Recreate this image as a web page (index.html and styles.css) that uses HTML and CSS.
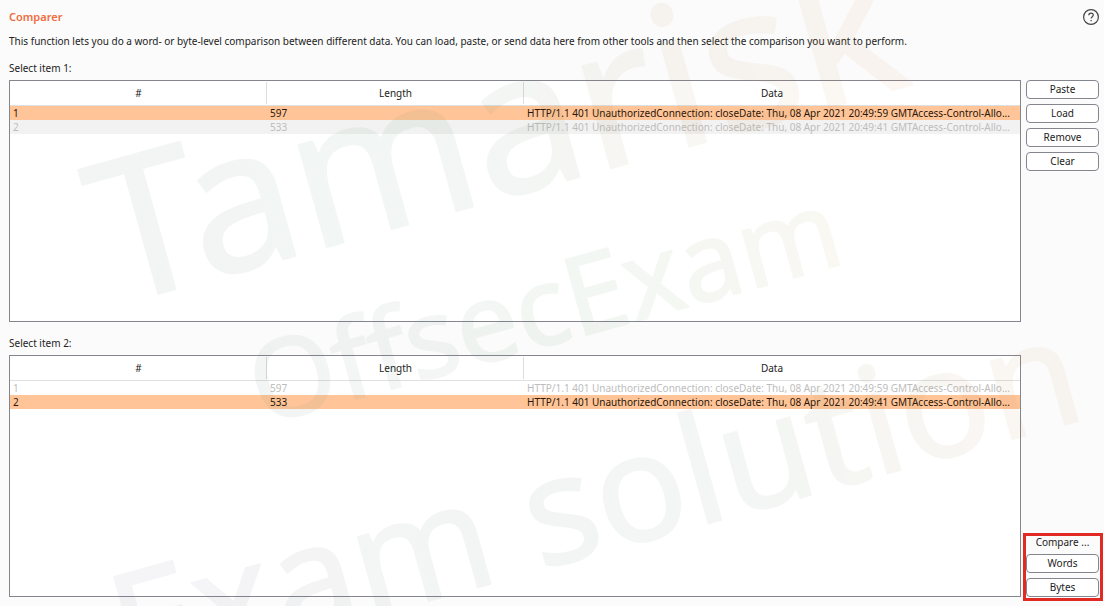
FILE: index.html
```html
<!DOCTYPE html>
<html lang="en">
<head>
<meta charset="utf-8">
<title>Comparer</title>
<link rel="stylesheet" href="styles.css">
</head>
<body>
<main class="comparer">
  <header class="heading">
    <h1 class="title">Comparer</h1>
    <button class="help" type="button" aria-label="Help">
      <svg class="help-icon" viewBox="0 0 16 16" aria-hidden="true">
        <circle cx="8" cy="8" r="7.4"/>
        <path d="M5.8 6.3C5.8 4.9 6.7 4.1 8 4.1s2.3.8 2.3 2c0 1.600-2.200 1.700-2.200 3.500M8.100 11v1.300"/>
      </svg>
    </button>
  </header>
  <p class="intro">This function lets you do a word- or byte-level comparison between different data. You can load, paste, or send data here from other tools and then select the comparison you want to perform.</p>

  <div class="workspace">
    <section class="item">
      <h2 class="label" id="item1">Select item 1:</h2>
      <div class="panel">
        <table class="grid" aria-labelledby="item1">
          <thead><tr><th class="narrow">#</th><th class="narrow">Length</th><th>Data</th></tr></thead>
          <tbody>
            <tr class="selected"><td>1</td><td>597</td><td>HTTP/1.1 401 UnauthorizedConnection: closeDate: Thu, 08 Apr 2021 20:49:59 GMTAccess-Control-Allo...</td></tr>
            <tr class="dim striped"><td>2</td><td>533</td><td>HTTP/1.1 401 UnauthorizedConnection: closeDate: Thu, 08 Apr 2021 20:49:41 GMTAccess-Control-Allo...</td></tr>
          </tbody>
        </table>
      </div>
    </section>
    <div class="actions">
      <button class="btn" type="button">Paste</button>
      <button class="btn" type="button">Load</button>
      <button class="btn" type="button">Remove</button>
      <button class="btn" type="button">Clear</button>
    </div>

    <section class="item">
      <h2 class="label" id="item2">Select item 2:</h2>
      <div class="panel">
        <table class="grid" aria-labelledby="item2">
          <thead><tr><th class="narrow">#</th><th class="narrow">Length</th><th>Data</th></tr></thead>
          <tbody>
            <tr class="dim"><td>1</td><td>597</td><td>HTTP/1.1 401 UnauthorizedConnection: closeDate: Thu, 08 Apr 2021 20:49:59 GMTAccess-Control-Allo...</td></tr>
            <tr class="selected"><td>2</td><td>533</td><td>HTTP/1.1 401 UnauthorizedConnection: closeDate: Thu, 08 Apr 2021 20:49:41 GMTAccess-Control-Allo...</td></tr>
          </tbody>
        </table>
      </div>
    </section>
    <div class="compare">
      <span class="compare-label">Compare ...</span>
      <button class="btn" type="button">Words</button>
      <button class="btn" type="button">Bytes</button>
    </div>
  </div>
</main>

<svg class="watermark" viewBox="0 0 1104 606" aria-hidden="true">
  <defs>
    <linearGradient id="tint-top" x1="0" y1="0" x2="1" y2="0">
      <stop offset="0" stop-color="#386850"/>
      <stop offset=".5" stop-color="#407850"/>
      <stop offset=".7" stop-color="#a88040"/>
      <stop offset="1" stop-color="#d88038"/>
    </linearGradient>
    <linearGradient id="tint-mid" x1="0" y1="0" x2="1" y2="0">
      <stop offset="0" stop-color="#406858"/>
      <stop offset=".6" stop-color="#488850"/>
      <stop offset="1" stop-color="#a89040"/>
    </linearGradient>
    <linearGradient id="tint-low" x1="0" y1="0" x2="1" y2="0">
      <stop offset="0" stop-color="#685080"/>
      <stop offset=".4" stop-color="#486858"/>
      <stop offset=".65" stop-color="#487850"/>
      <stop offset="1" stop-color="#d08038"/>
    </linearGradient>
  </defs>
  <g class="words">
    <text class="top" transform="translate(114 306) rotate(-15.5)">Tamarisk</text>
    <text class="mid" transform="translate(262 425) rotate(-15.5)">OffsecExam</text>
    <text class="low" transform="translate(129 684) rotate(-15.5)">Exam solution</text>
  </g>
</svg>
</body>
</html>
```
FILE: styles.css
```css
* { box-sizing: border-box; }

body {
  margin: 0;
  background: #fbfbfb;
  color: #222;
  font: 10px/14px "Noto Sans", sans-serif;
}

.comparer {
  display: flex;
  flex-direction: column;
  min-height: 100vh;
  padding: 9px 5px 9px 9px;
}

.heading {
  display: flex;
  align-items: center;
  justify-content: space-between;
  height: 16px;
}

.title {
  margin: 0;
  color: #f06c40;
  font-size: 11px;
  font-weight: 600;
}

.help {
  width: 16px;
  height: 16px;
  padding: 0;
  border: 0;
  background: none;
}

.help-icon {
  display: block;
  fill: none;
  stroke: #444;
  stroke-width: 1.2;
}

.intro { margin: 9px 0 13px; }

.workspace {
  flex: 1;
  display: grid;
  grid-template-columns: minmax(0, 1fr) 73px;
  grid-template-rows: 1fr 1fr;
  gap: 14px 5px;
}

.item {
  display: flex;
  flex-direction: column;
}

.label {
  margin: 0 0 5px;
  font-size: 10px;
  font-weight: 400;
}

.panel {
  flex: 1;
  border: 1px solid #85858f;
  background: #fff;
}

.grid {
  width: 100%;
  table-layout: fixed;
  border-collapse: separate;
  border-spacing: 0;
}

.grid th {
  height: 25px;
  padding: 0;
  border-bottom: 1px solid #e0e0e0;
  background: linear-gradient(#ddd, #ddd) right center / 1px 22px no-repeat;
  font-weight: 400;
}

.grid th:last-child { background: none; }

.narrow { width: 257px; }

.grid td {
  height: 14px;
  padding: 0 3px;
  overflow: hidden;
  white-space: nowrap;
}

.selected { background: #ffc599; color: #2b1608; }
.dim { color: #bdbdbd; }
.striped { background: #f2f2f2; }

.actions {
  display: flex;
  flex-direction: column;
  gap: 5px;
  padding-top: 19px;
}

.btn {
  height: 19px;
  padding: 0 0 1px;
  border: 1px solid #85858f;
  border-radius: 4px;
  background: #fff;
  color: #222;
  font: inherit;
}

.compare {
  display: flex;
  flex-direction: column;
  gap: 5px;
  align-self: end;
  margin: 0 -4px -4px -3px;
  padding: 0 1px 1px 0;
  border: 3px solid #e02a24;
}

.compare-label {
  line-height: 13px;
  text-align: center;
}

.watermark {
  position: absolute;
  top: 0;
  left: 0;
  width: 100%;
  height: 100%;
  pointer-events: none;
}

.words {
  opacity: .06;
  stroke-width: 2;
  stroke-linejoin: round;
}

.top { font-size: 197px; fill: url(#tint-top); stroke: url(#tint-top); }
.mid { font-size: 109px; fill: url(#tint-mid); stroke: url(#tint-mid); }
.low { font-size: 150px; fill: url(#tint-low); stroke: url(#tint-low); }
```
